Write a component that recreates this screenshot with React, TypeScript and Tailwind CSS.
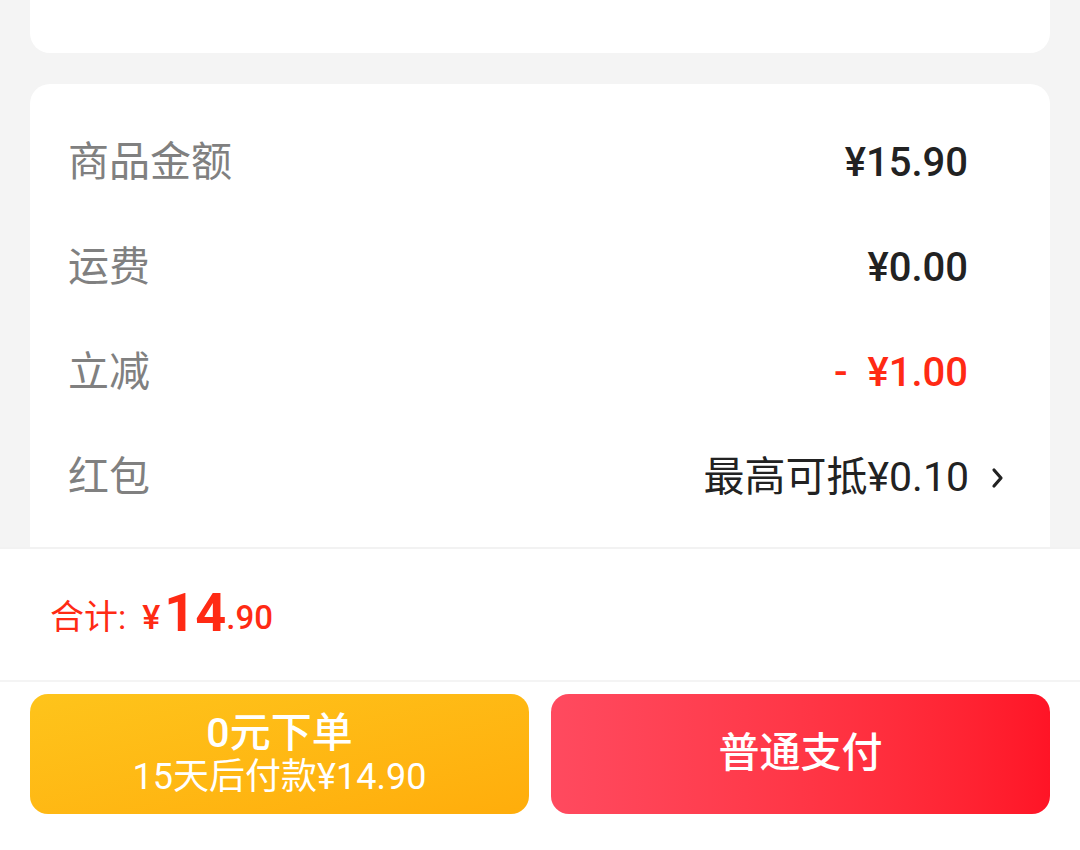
import React from 'react';

const rows = [
  { label: '商品金额', value: '¥15.90', tone: 'dark' },
  { label: '运费', value: '¥0.00', tone: 'dark' },
  { label: '立减', value: '-  ¥1.00', tone: 'red' },
  { label: '红包', value: '最高可抵¥0.10', tone: 'normal', arrow: true },
];

const Chevron = () => (
  <svg width="16" height="28" viewBox="0 0 16 28" fill="none" className="ml-[21px]">
    <path d="M4 6 L11 14 L4 22" stroke="#222" strokeWidth="3.2" strokeLinecap="round" strokeLinejoin="round" />
  </svg>
);

export default function App() {
  return (
    <div
      className="w-[1080px] h-[850px] flex flex-col bg-[#f4f4f4] overflow-hidden"
      style={{ fontFamily: 'Roboto, "Noto Sans CJK SC", sans-serif' }}
    >
      {/* scroll area */}
      <div className="h-[547px] px-[30px] flex flex-col gap-[31px] overflow-hidden">
        <div className="h-[53px] bg-white rounded-b-[20px] shrink-0" />
        <div className="bg-white rounded-[20px] pt-[26px] pl-[38px] pr-[44px] shrink-0 pb-[40px]">
          {rows.map((r) => (
            <div key={r.label} className="h-[105px] flex items-center justify-between">
              <span className="text-[41px] text-[#808080]">{r.label}</span>
              <div className="flex items-center">
                <span
                  className={
                    r.tone === 'red'
                      ? 'text-[40px] font-medium text-[#ff2a14] whitespace-pre'
                      : r.tone === 'dark'
                      ? 'text-[40px] font-medium text-[#222222]'
                      : 'text-[41px] text-[#222222]'
                  }
                >
                  {r.value}
                </span>
                {r.arrow ? <Chevron /> : <div className="w-[38px]" />}
              </div>
            </div>
          ))}
        </div>
      </div>

      {/* bottom bar */}
      <div className="flex-1 bg-white border-t-2 border-[#f2f2f2] flex flex-col">
        <div className="h-[133px] flex items-center pl-[50px] text-[#ff2a14] border-b-2 border-[#f4f4f4]">
          <span className="text-[34px] mt-[6px]">合计:</span>
          <span className="text-[34px] font-medium ml-[16px] mt-[6px]">¥</span>
          <span className="text-[54px] font-bold leading-none ml-[4px] mb-[4px]">14</span>
          <span className="text-[33px] font-medium mt-[6px]">.90</span>
        </div>
        <div className="flex gap-[22px] px-[30px] pt-[12px]">
          <button className="flex-1 h-[120px] rounded-[18px] bg-gradient-to-br from-[#fec41b] to-[#ffad0b] text-white flex flex-col items-center justify-center">
            <span className="text-[41px] font-medium leading-[46px]">0元下单</span>
            <span className="text-[36px] leading-[42px]">15天后付款¥14.90</span>
          </button>
          <button className="flex-1 h-[120px] rounded-[18px] bg-gradient-to-r from-[#ff4a5f] to-[#ff1426] text-white flex items-center justify-center">
            <span className="text-[41px] font-medium">普通支付</span>
          </button>
        </div>
      </div>
    </div>
  );
}
